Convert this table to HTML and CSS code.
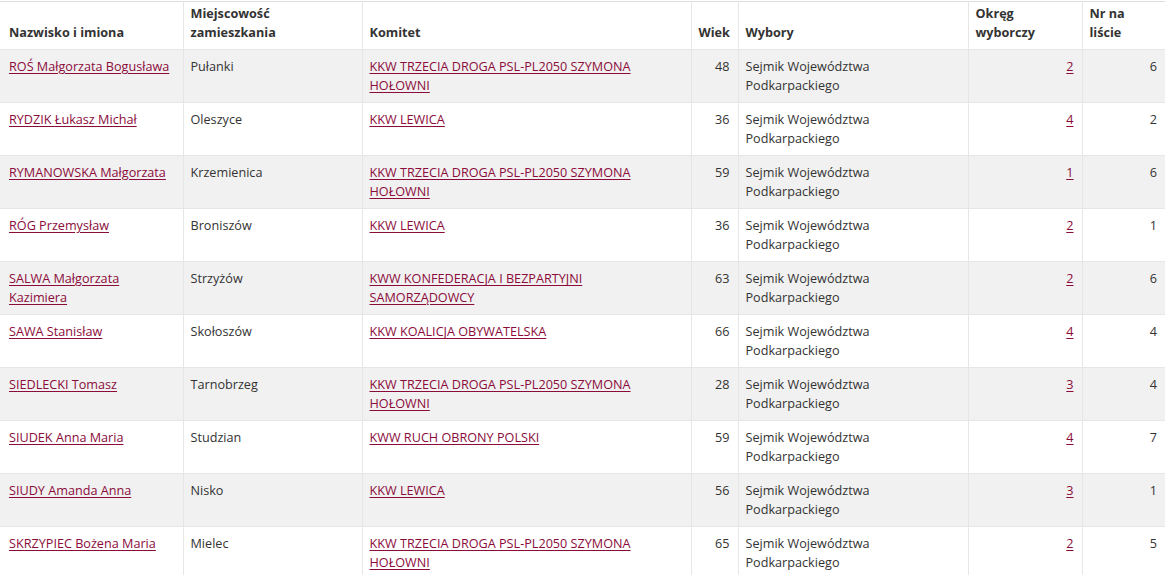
FILE: index.html
```html
<!DOCTYPE html>
<html lang="pl">
<head>
<meta charset="utf-8">
<link rel="stylesheet" href="styles.css">
</head>
<body>
<table class="results">
  <colgroup>
    <col class="c-name"><col class="c-town"><col class="c-com"><col class="c-age"><col class="c-elec"><col class="c-dist"><col class="c-nr">
  </colgroup>
  <thead>
    <tr>
      <th>Nazwisko i imiona</th>
      <th>Miejscowość zamieszkania</th>
      <th>Komitet</th>
      <th class="num">Wiek</th>
      <th>Wybory</th>
      <th>Okręg wyborczy</th>
      <th>Nr na liście</th>
    </tr>
  </thead>
  <tbody>
    <tr>
      <td><a href="#">ROŚ Małgorzata Bogusława</a></td>
      <td>Pułanki</td>
      <td><a href="#">KKW TRZECIA DROGA PSL-PL2050 SZYMONA HOŁOWNI</a></td>
      <td class="num">48</td>
      <td>Sejmik Województwa Podkarpackiego</td>
      <td class="num"><a href="#">2</a></td>
      <td class="num">6</td>
    </tr>
    <tr>
      <td><a href="#">RYDZIK Łukasz Michał</a></td>
      <td>Oleszyce</td>
      <td><a href="#">KKW LEWICA</a></td>
      <td class="num">36</td>
      <td>Sejmik Województwa Podkarpackiego</td>
      <td class="num"><a href="#">4</a></td>
      <td class="num">2</td>
    </tr>
    <tr>
      <td><a href="#">RYMANOWSKA Małgorzata</a></td>
      <td>Krzemienica</td>
      <td><a href="#">KKW TRZECIA DROGA PSL-PL2050 SZYMONA HOŁOWNI</a></td>
      <td class="num">59</td>
      <td>Sejmik Województwa Podkarpackiego</td>
      <td class="num"><a href="#">1</a></td>
      <td class="num">6</td>
    </tr>
    <tr>
      <td><a href="#">RÓG Przemysław</a></td>
      <td>Broniszów</td>
      <td><a href="#">KKW LEWICA</a></td>
      <td class="num">36</td>
      <td>Sejmik Województwa Podkarpackiego</td>
      <td class="num"><a href="#">2</a></td>
      <td class="num">1</td>
    </tr>
    <tr>
      <td><a href="#">SALWA Małgorzata Kazimiera</a></td>
      <td>Strzyżów</td>
      <td><a href="#">KWW KONFEDERACJA I BEZPARTYJNI SAMORZĄDOWCY</a></td>
      <td class="num">63</td>
      <td>Sejmik Województwa Podkarpackiego</td>
      <td class="num"><a href="#">2</a></td>
      <td class="num">6</td>
    </tr>
    <tr>
      <td><a href="#">SAWA Stanisław</a></td>
      <td>Skołoszów</td>
      <td><a href="#">KKW KOALICJA OBYWATELSKA</a></td>
      <td class="num">66</td>
      <td>Sejmik Województwa Podkarpackiego</td>
      <td class="num"><a href="#">4</a></td>
      <td class="num">4</td>
    </tr>
    <tr>
      <td><a href="#">SIEDLECKI Tomasz</a></td>
      <td>Tarnobrzeg</td>
      <td><a href="#">KKW TRZECIA DROGA PSL-PL2050 SZYMONA HOŁOWNI</a></td>
      <td class="num">28</td>
      <td>Sejmik Województwa Podkarpackiego</td>
      <td class="num"><a href="#">3</a></td>
      <td class="num">4</td>
    </tr>
    <tr>
      <td><a href="#">SIUDEK Anna Maria</a></td>
      <td>Studzian</td>
      <td><a href="#">KWW RUCH OBRONY POLSKI</a></td>
      <td class="num">59</td>
      <td>Sejmik Województwa Podkarpackiego</td>
      <td class="num"><a href="#">4</a></td>
      <td class="num">7</td>
    </tr>
    <tr>
      <td><a href="#">SIUDY Amanda Anna</a></td>
      <td>Nisko</td>
      <td><a href="#">KKW LEWICA</a></td>
      <td class="num">56</td>
      <td>Sejmik Województwa Podkarpackiego</td>
      <td class="num"><a href="#">3</a></td>
      <td class="num">1</td>
    </tr>
    <tr>
      <td><a href="#">SKRZYPIEC Bożena Maria</a></td>
      <td>Mielec</td>
      <td><a href="#">KKW TRZECIA DROGA PSL-PL2050 SZYMONA HOŁOWNI</a></td>
      <td class="num">65</td>
      <td>Sejmik Województwa Podkarpackiego</td>
      <td class="num"><a href="#">2</a></td>
      <td class="num">5</td>
    </tr>
  </tbody>
</table>
</body>
</html>
```
FILE: styles.css
```css
html, body {
  margin: 0;
  padding: 0;
  background: #fff;
}
body {
  font-family: "Open Sans", "Liberation Sans", sans-serif;
  font-size: 12.65px;
  line-height: 19px;
  color: #333;
}
.results {
  width: 1165px;
  border-collapse: collapse;
  table-layout: fixed;
  border-top: 1px solid #dcdcdc;
  margin-top: 1px;
}
.c-name { width: 183px; }
.c-town { width: 179px; }
.c-com { width: 329px; }
.c-age { width: 47px; }
.c-elec { width: 230px; }
.c-dist { width: 114px; }
.c-nr { width: 83px; }

.results th {
  font-weight: 700;
  text-align: left;
  vertical-align: bottom;
  padding: 2px 8px 7px 7px;
  height: 38px;
  border-left: 1px solid #e6e6e6;
  border-bottom: 1px solid #e6e6e6;
}
.results td {
  vertical-align: top;
  padding: 7px 8px 7px 7px;
  height: 38px;
  border-left: 1px solid #e6e6e6;
  border-top: 1px solid #e6e6e6;
}
.results th:first-child,
.results td:first-child {
  border-left: none;
  padding-left: 9px;
}
.results tbody tr:nth-child(odd) td {
  background: #f1f1f1;
}
.results .num {
  text-align: right;
}
.results a {
  color: #8b0c3b;
  text-decoration: underline;
  text-underline-offset: 2px;
}
```
